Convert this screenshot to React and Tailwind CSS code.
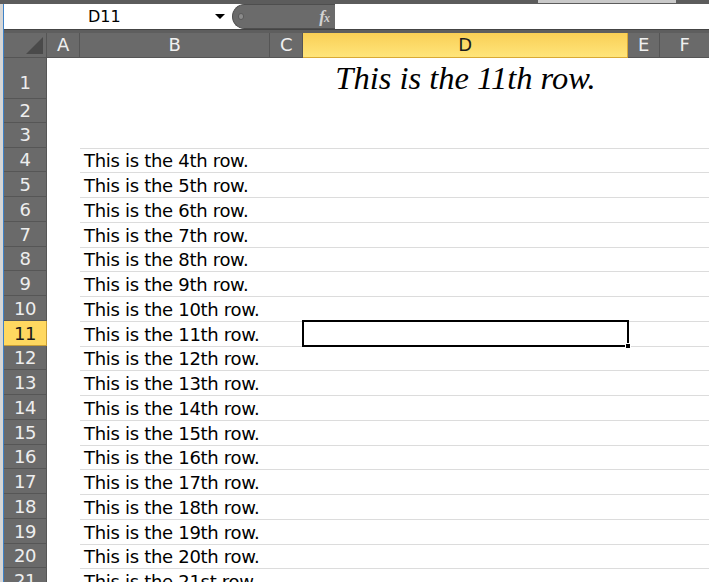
import React from 'react';

const SANS = { fontFamily: '"DejaVu Sans", Verdana, sans-serif' };

function ordinal(n) {
  if (n % 100 >= 11 && n % 100 <= 13) return n + 'th';
  if (n % 10 === 1) return n + 'st';
  if (n % 10 === 2) return n + 'nd';
  if (n % 10 === 3) return n + 'rd';
  return n + 'th';
}

const rows = [
  { n: 1, h: 'h-[41px]', pb: 'pb-[6px]' },
  { n: 2, h: 'h-[24px]', pb: 'pb-[2px]' },
  { n: 3, h: 'h-[24.5px]', pb: 'pb-[3px]' },
];
for (let i = 4; i <= 21; i++) rows.push({ n: i, h: 'h-[24.75px]', pb: 'pb-[2px]', text: `This is the ${ordinal(i)} row.` });

function ColHeader({ label, w, active, last }) {
  return (
    <div
      className={`${w} shrink-0 flex items-end justify-center pb-[3px] leading-none border-b ${last ? '' : 'border-r'} ${
        active
          ? 'bg-gradient-to-b from-[#f9cf55] to-[#ffe57a] text-[#1c1c1c] border-[#d9a935]'
          : 'bg-[#6a6a6a] text-[#f0f0f0] border-[#555555]'
      }`}
    >
      {label}
    </div>
  );
}

function Row({ n, h, pb, text }) {
  const active = n === 11;
  const lined = n >= 4;
  return (
    <div className={`flex ${h} shrink-0`}>
      <div
        className={`w-[43px] shrink-0 flex items-end justify-center leading-none border-b border-r ${pb} ${
          active ? 'bg-[#ffd860] text-[#1a1a1a] border-[#c99e36]' : 'bg-[#6a6a6a] text-[#eeeeee] border-[#565656]'
        }`}
      >
        {n}
      </div>
      <div className="w-[33px] shrink-0" />
      <div className={`flex-1 flex ${lined ? 'border-t border-[#dcdcdc]' : ''}`}>
        <div className={`w-[190px] shrink-0 flex items-end pl-[4px] leading-none whitespace-nowrap text-black tracking-[-0.3px] ${pb}`}>
          {text}
        </div>
        <div className="w-[33px] shrink-0" />
        <div className="w-[325px] shrink-0 relative flex items-end justify-center">
          {n === 1 && (
            <span
              className="text-[32.5px] italic leading-none text-black pb-[5px] whitespace-nowrap tracking-normal"
              style={{ fontFamily: '"Liberation Serif", "Times New Roman", serif' }}
            >
              This is the 11th row.
            </span>
          )}
          {active && (
            <div className="absolute left-[-1px] right-[-1px] top-[-2px] bottom-[-1px] border-2 border-black">
              <div className="absolute right-[-4px] bottom-[-4px] w-[6px] h-[6px] bg-black border border-white" />
            </div>
          )}
        </div>
        <div className="flex-1" />
      </div>
    </div>
  );
}

export default function App() {
  return (
    <div className="w-[709px] h-[582px] overflow-hidden bg-white flex flex-col text-[18px] tracking-[-0.4px]" style={SANS}>
      <div className="h-[4px] shrink-0 bg-[#5c5c5c] flex">
        <div className="w-[538px]" />
        <div className="w-[138px] h-[3px] bg-[#c9c9c9]" />
      </div>
      <div className="flex-1 flex min-h-0">
        <div className="w-[4px] shrink-0 bg-[#d6d6d6] border-r border-[#3f82c6]" />
        <div className="flex-1 flex flex-col min-w-0">
          {/* formula bar */}
          <div className="h-[25px] shrink-0 flex bg-white">
            <div className="w-[228px] shrink-0 flex items-center relative">
              <span className="ml-[84px] text-[16px] tracking-normal text-black leading-none">D11</span>
              <svg className="absolute left-[211px] top-[10px]" width="10" height="5" viewBox="0 0 10 5">
                <path d="M0 0 L10 0 L5 5 Z" fill="#000" />
              </svg>
            </div>
            <div className="w-[103px] shrink-0 rounded-l-full bg-[#6b6b6b] border border-r-0 border-[#4e4e4e] relative flex items-center">
              <div className="ml-[5px] w-[6px] h-[7px] rounded-[3px] bg-[#8a8a8a] border border-[#5a5a5a]" />
              <span
                className="absolute right-[6px] top-[2px] text-[17px] italic font-bold text-[#d2d2d2] tracking-[-1px] leading-[20px]"
                style={{ fontFamily: '"Liberation Serif", serif' }}
              >
                f<span className="text-[12px]">x</span>
              </span>
            </div>
            <div className="flex-1" />
          </div>
          <div className="h-[4px] shrink-0 bg-[#5e5e5e] border-t border-[#444444]" />
          {/* column headers */}
          <div className="h-[25px] shrink-0 flex">
            <div className="w-[43px] shrink-0 bg-[#6a6a6a] border-r border-b border-[#555555] relative">
              <svg className="absolute right-[3px] bottom-[3px]" width="17" height="17" viewBox="0 0 17 17">
                <path d="M17 0 L17 17 L0 17 Z" fill="#4a4a4a" />
              </svg>
            </div>
            <ColHeader label="A" w="w-[33px]" />
            <ColHeader label="B" w="w-[190px]" />
            <ColHeader label="C" w="w-[33px]" />
            <ColHeader label="D" w="w-[325px]" active />
            <ColHeader label="E" w="w-[32px]" />
            <ColHeader label="F" w="flex-1" last />
          </div>
          {/* grid */}
          <div className="flex-1 flex flex-col min-h-0">
            {rows.map((r) => (
              <Row key={r.n} {...r} />
            ))}
          </div>
        </div>
      </div>
    </div>
  );
}
